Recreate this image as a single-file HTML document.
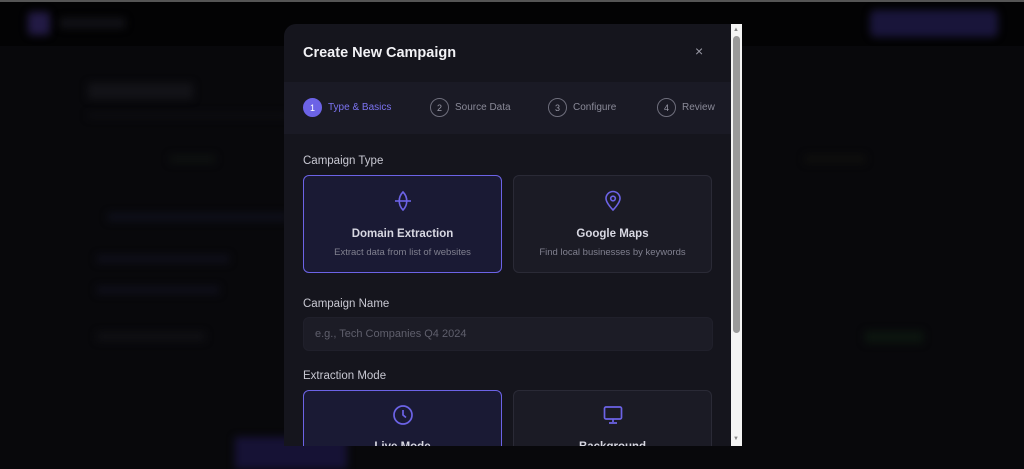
<!DOCTYPE html>
<html><head><meta charset="utf-8"><style>
*{box-sizing:border-box;margin:0;padding:0}
body{width:1024px;height:469px;overflow:hidden;background:#08080b;font-family:"Liberation Sans",sans-serif;position:relative}
.abs{position:absolute}
.blur{filter:blur(4px)}
.modal{position:absolute;left:284px;top:24px;width:447px;height:422px;background:#15151d;border-radius:12px 0 0 0;overflow:hidden}
.steps{position:absolute;left:0;top:58px;width:447px;height:52px;background:#1a1a25}
.step{position:absolute;top:16px;display:flex;align-items:center;font-size:10px;color:#8a8a98}
.circ{width:19px;height:19px;border-radius:50%;border:1.3px solid #6e6e7c;display:flex;align-items:center;justify-content:center;font-size:9px;color:#9a9aa8;margin-right:6px}
.card{position:absolute;width:199px;border-radius:6px;border:1px solid #2a2a36;background:#1b1b25;text-align:center}
.card.sel{border:1.5px solid #6c63e6;background:#1a1a34}
.t{font-size:11.5px;font-weight:bold;color:#d8d8e2;position:absolute;width:100%;top:52px}
.s{font-size:9.5px;color:#80808f;position:absolute;width:100%;top:71px}
.lbl{position:absolute;left:19px;font-size:11.5px;color:#c8c8d2}
</style></head><body>
<div class="abs" style="left:0;top:0;width:1024px;height:2px;background:#555"></div>
<div class="abs" style="left:0;top:2px;width:1024px;height:44px;background:#030304"></div>
<div class="abs blur" style="left:28px;top:12px;width:22px;height:23px;background:#221a44;border-radius:4px"></div>
<div class="abs blur" style="left:60px;top:18px;width:65px;height:10px;background:#121217"></div>
<div class="abs blur" style="left:870px;top:10px;width:128px;height:27px;background:#19153a;border-radius:6px"></div>
<div class="abs blur" style="left:88px;top:83px;width:105px;height:16px;background:#131318"></div>
<div class="abs blur" style="left:88px;top:113px;width:200px;height:5px;background:#0e0e12"></div>
<div class="abs blur" style="left:170px;top:155px;width:45px;height:8px;background:#0e1110"></div>
<div class="abs blur" style="left:805px;top:155px;width:60px;height:8px;background:#0f0f0d"></div>
<div class="abs blur" style="left:108px;top:213px;width:180px;height:8px;background:#0f101b"></div>
<div class="abs blur" style="left:97px;top:255px;width:132px;height:8px;background:#0f0f1a"></div>
<div class="abs blur" style="left:97px;top:286px;width:122px;height:8px;background:#0f0f1a"></div>
<div class="abs blur" style="left:97px;top:332px;width:108px;height:9px;background:#101014"></div>
<div class="abs blur" style="left:865px;top:331px;width:58px;height:12px;background:#0c150f"></div>
<div class="abs blur" style="left:235px;top:437px;width:112px;height:32px;background:#161235"></div>
<div class="modal">
  <div class="abs" style="left:19px;top:21px;font-size:14.5px;font-weight:bold;color:#f2f2f6">Create New Campaign</div>
  <div class="abs" style="left:411px;top:19px;font-size:14px;color:#9a9aa6">×</div>
  <div class="steps">
    <div class="step" style="left:19px;color:#7b73f0"><div class="circ" style="background:#6c63e6;border-color:#6c63e6;color:#fff">1</div>Type &amp; Basics</div>
    <div class="step" style="left:146px"><div class="circ">2</div>Source Data</div>
    <div class="step" style="left:264px"><div class="circ">3</div>Configure</div>
    <div class="step" style="left:373px"><div class="circ">4</div>Review</div>
  </div>
  <div class="lbl" style="top:131px">Campaign Type</div>
  <div class="card sel" style="left:19px;top:151px;height:98px">
    <svg class="abs" style="left:89px;top:14px" width="20" height="22" viewBox="0 0 20 22" fill="none" stroke="#6c63e6" stroke-width="1.6"><path d="M10 2C5 7 5 15 10 20C15 15 15 7 10 2Z"/><path d="M2 11H18"/></svg>
    <div class="t">Domain Extraction</div><div class="s">Extract data from list of websites</div>
  </div>
  <div class="card" style="left:229px;top:151px;height:98px">
    <svg class="abs" style="left:89px;top:14px" width="20" height="22" viewBox="0 0 20 22" fill="none" stroke="#6c63e6" stroke-width="1.6"><path d="M10 20C10 20 3 13 3 8.5A7 7 0 0 1 17 8.5C17 13 10 20 10 20Z"/><circle cx="10" cy="8.5" r="2.3"/></svg>
    <div class="t">Google Maps</div><div class="s">Find local businesses by keywords</div>
  </div>
  <div class="lbl" style="top:274px">Campaign Name</div>
  <div class="abs" style="left:19px;top:293px;width:410px;height:34px;background:#1c1c26;border-radius:6px;border:1px solid #20202b;font-size:11px;color:#5f5f6c;padding:10px 11px">e.g., Tech Companies Q4 2024</div>
  <div class="lbl" style="top:346px">Extraction Mode</div>
  <div class="card sel" style="left:19px;top:366px;height:90px">
    <svg class="abs" style="left:88px;top:13px" width="22" height="22" viewBox="0 0 22 22" fill="none" stroke="#6c63e6" stroke-width="1.7"><circle cx="11" cy="11" r="9"/><path d="M11 6V11L14 13.5"/></svg>
    <div class="t" style="top:50px">Live Mode</div>
  </div>
  <div class="card" style="left:229px;top:366px;height:90px">
    <svg class="abs" style="left:88px;top:13px" width="22" height="22" viewBox="0 0 22 22" fill="none" stroke="#6c63e6" stroke-width="1.7"><rect x="2.5" y="3" width="17" height="12" rx="1.5"/><path d="M11 15V18M7 19H15"/></svg>
    <div class="t" style="top:50px">Background</div>
  </div>
</div>
<div class="abs" style="left:731px;top:24px;width:11px;height:422px;background:#f4f4f4"></div>
<div class="abs" style="left:733px;top:36px;width:7px;height:297px;background:#9a9a9a;border-radius:4px"></div>
<div class="abs" style="left:733px;top:27px;font-size:6px;color:#888">▲</div>
<div class="abs" style="left:733px;top:436px;font-size:6px;color:#888">▼</div>
</body></html>
